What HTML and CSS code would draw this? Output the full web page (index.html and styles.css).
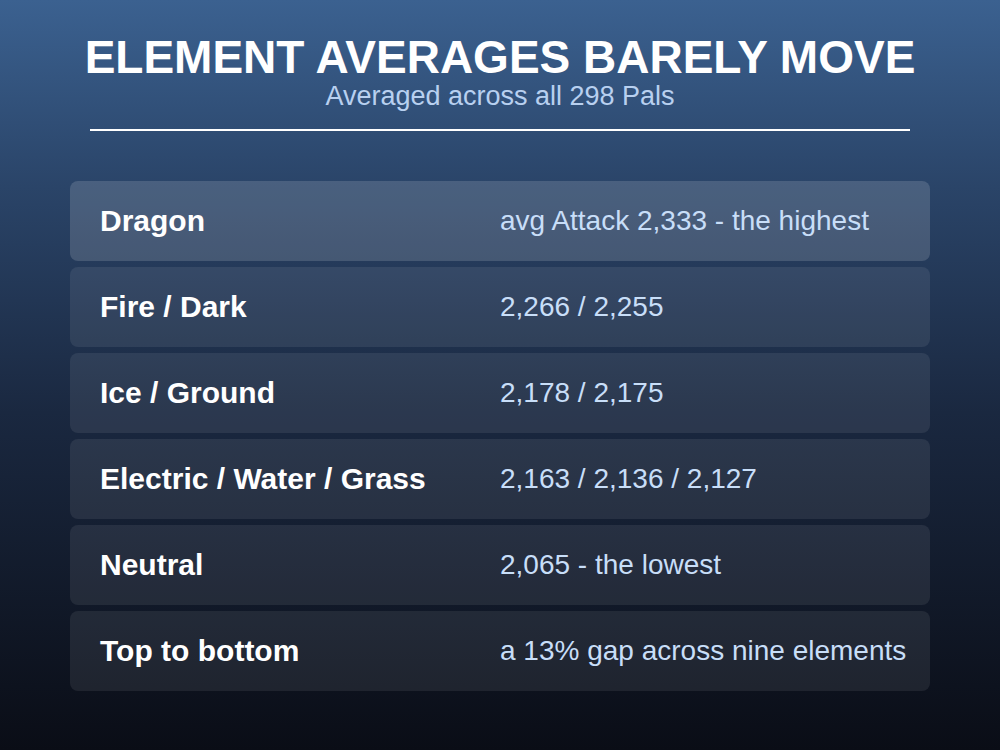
FILE: index.html
```html
<!DOCTYPE html>
<html>
<head>
<meta charset="utf-8">
<link rel="stylesheet" href="styles.css">
</head>
<body>
<div class="slide">
  <header class="head">
    <h1 class="title">ELEMENT AVERAGES BARELY MOVE</h1>
    <p class="sub">Averaged across all 298 Pals</p>
    <div class="rule"></div>
  </header>
  <div class="rows">
    <div class="row first"><span class="label">Dragon</span><span class="value">avg Attack 2,333 - the highest</span></div>
    <div class="row"><span class="label">Fire / Dark</span><span class="value">2,266 / 2,255</span></div>
    <div class="row"><span class="label">Ice / Ground</span><span class="value">2,178 / 2,175</span></div>
    <div class="row"><span class="label">Electric / Water / Grass</span><span class="value">2,163 / 2,136 / 2,127</span></div>
    <div class="row"><span class="label">Neutral</span><span class="value">2,065 - the lowest</span></div>
    <div class="row"><span class="label">Top to bottom</span><span class="value">a 13% gap across nine elements</span></div>
  </div>
</div>
</body>
</html>
```

FILE: styles.css
```css
* { box-sizing: border-box; }
html, body { margin: 0; padding: 0; }
body {
  width: 1000px;
  height: 750px;
  overflow: hidden;
  font-family: "Liberation Sans", Arial, sans-serif;
}
.slide {
  width: 1000px;
  height: 750px;
  background: linear-gradient(180deg, #3b6190 0%, #2a4468 25%, #1a2840 55%, #0a0d16 100%);
  display: flex;
  flex-direction: column;
  align-items: center;
}
.head {
  display: flex;
  flex-direction: column;
  align-items: center;
  width: 860px;
  padding-top: 32px;
}
.title {
  margin: 0;
  color: #ffffff;
  font-size: 46px;
  font-weight: bold;
  line-height: 50px;
  white-space: nowrap;
}
.sub {
  margin: 0;
  color: #b8d0f0;
  font-size: 27px;
  line-height: 28px;
  white-space: nowrap;
}
.rule {
  width: 820px;
  height: 2px;
  background: #ffffff;
  margin-top: 19px;
}
.rows {
  width: 860px;
  margin-top: 50px;
  display: flex;
  flex-direction: column;
  gap: 6px;
}
.row {
  height: 80px;
  border-radius: 8px;
  background: rgba(255, 255, 255, 0.08);
  display: flex;
  align-items: center;
  padding-left: 30px;
}
.row.first {
  background: rgba(255, 255, 255, 0.15);
}
.label {
  width: 400px;
  flex: none;
  color: #ffffff;
  font-size: 30px;
  font-weight: bold;
}
.value {
  color: #c8def8;
  font-size: 28px;
  white-space: nowrap;
}
```
